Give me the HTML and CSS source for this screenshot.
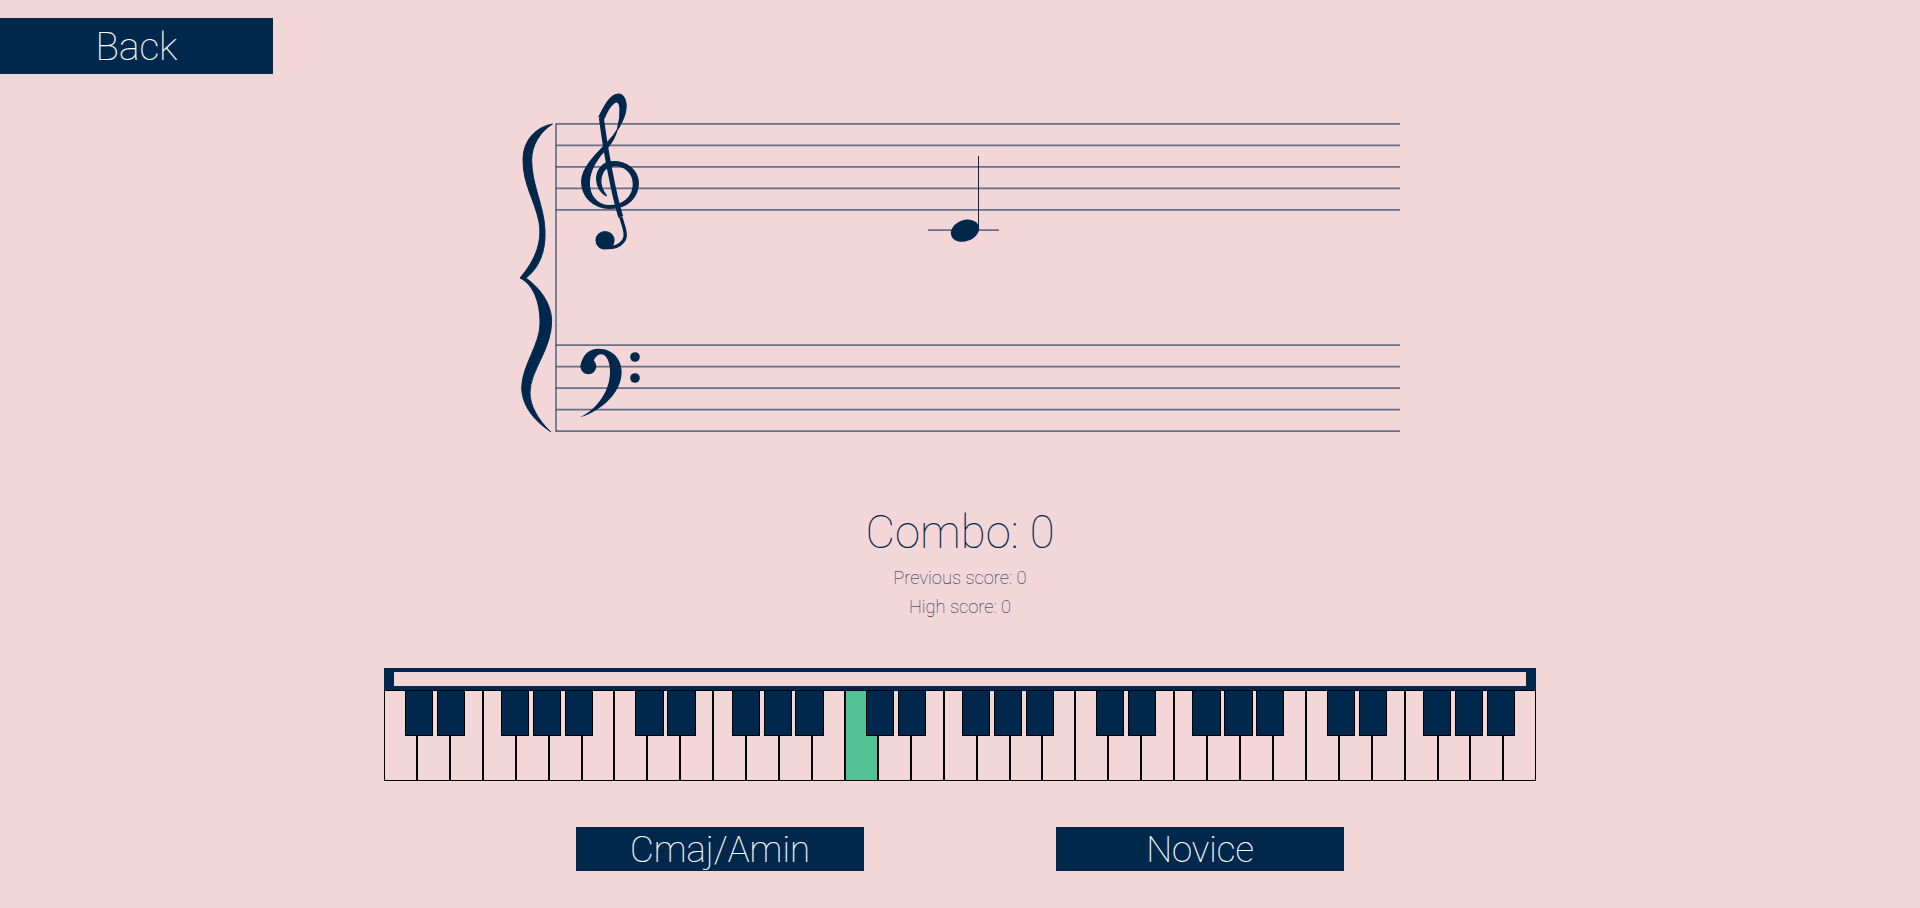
FILE: index.html
```html
<!DOCTYPE html>
<html>
	<head>
		<meta charset="UTF-8">
		<title>Note Trainer</title>
		<link rel="stylesheet" href="styles.css">
	</head>
	<body>
		<div class="back-row">
			<button class="btn btn-back">Back</button>
		</div>

		<main class="trainer">
			<svg class="score" viewBox="510 90 900 360" width="900" height="360">
				<g class="staff">
					<path d="M556 123.5V431.7"/>
					<path d="M556 123.87H1400M556 145.37H1400M556 166.87H1400M556 188.37H1400M556 209.87H1400"/>
					<path d="M556 345.2H1400M556 366.7H1400M556 388.2H1400M556 409.7H1400M556 431.2H1400"/>
					<path d="M928 230.2H999"/>
				</g>

				<!-- brace -->
				<path class="glyph brace" d="M552.5 124C536 127 523 140 523 160C523 185 534 198 539 222C542 240 537 258 520 278C534 285 540 303 540 323C540 345 522 365 521.7 388C522 405 533 420 550.7 431.7C538 420 530 405 530 393C530 370 552 350 551.7 320C551 303 540 288 526 278C539 268 546 252 545 230C544 205 531.7 185 531.7 160C531.7 145 540 132 552.5 124Z"/>

				<!-- treble clef -->
				<g class="treble" transform="translate(500 80) scale(.33333)">
					<path class="glyph" d="M355 42C375 42 380 70 378 85C375 120 345 165 320 190C285 225 245 265 245 305C245 350 280 385 330 385C385 385 415 350 415 310C415 270 380 245 340 245C305 245 288 275 290 300C292 325 305 340 320 348C310 335 300 315 303 295C308 268 325 257 345 257C375 257 400 280 400 312C400 350 370 378 325 377C290 375 266 345 268 305C270 265 300 225 325 200C350 170 362 125 360 85C359 68 352 62 343 68C330 78 320 95 313 114L297 110C310 85 330 42 355 42Z"/>
					<path class="clef-stem" d="M304 112C315 200 340 340 362 410"/>
					<path class="clef-tail" d="M362 410C375 450 382 470 368 485C358 498 340 503 322 503"/>
					<ellipse class="glyph" cx="315" cy="481" rx="27" ry="26"/>
				</g>

				<!-- bass clef -->
				<g transform="translate(500 260) scale(.33333)">
					<path class="glyph" d="M242 315C248 282 270 266 295 266C340 266 365 300 365 335C365 395 310 450 240 472C295 445 330 390 330 335C330 305 320 285 305 283C293 282 285 292 280 305L250 305Z"/>
					<circle class="glyph" cx="265" cy="319" r="24"/>
					<circle class="glyph" cx="405" cy="291" r="14.5"/>
					<circle class="glyph" cx="405" cy="354" r="14.5"/>
				</g>

				<!-- note -->
				<ellipse class="glyph" cx="965" cy="230.7" rx="14.5" ry="10.5" transform="rotate(-20 965 230.7)"/>
				<path class="note-stem" d="M978.5 156V230"/>
			</svg>

			<div class="stats">
				<div class="combo">Combo: 0</div>
				<div class="score-line">Previous score: 0</div>
				<div class="score-line">High score: 0</div>
			</div>

			<div class="piano">
				<div class="piano-bar"><div class="piano-bar-inner"></div></div>
				<div class="keys">
					<div class="white-keys">
						<div class="white-key"></div><div class="white-key"></div><div class="white-key"></div><div class="white-key"></div><div class="white-key"></div><div class="white-key"></div><div class="white-key"></div>
						<div class="white-key"></div><div class="white-key"></div><div class="white-key"></div><div class="white-key"></div><div class="white-key"></div><div class="white-key"></div><div class="white-key"></div>
						<div class="white-key active"></div><div class="white-key"></div><div class="white-key"></div><div class="white-key"></div><div class="white-key"></div><div class="white-key"></div><div class="white-key"></div>
						<div class="white-key"></div><div class="white-key"></div><div class="white-key"></div><div class="white-key"></div><div class="white-key"></div><div class="white-key"></div><div class="white-key"></div>
						<div class="white-key"></div><div class="white-key"></div><div class="white-key"></div><div class="white-key"></div><div class="white-key"></div><div class="white-key"></div><div class="white-key"></div>
					</div>
					<div class="black-keys">
						<div class="octave"><div class="black-key"></div><div class="black-key"></div><div class="black-key skip"></div><div class="black-key"></div><div class="black-key"></div></div>
						<div class="octave"><div class="black-key"></div><div class="black-key"></div><div class="black-key skip"></div><div class="black-key"></div><div class="black-key"></div></div>
						<div class="octave"><div class="black-key"></div><div class="black-key"></div><div class="black-key skip"></div><div class="black-key"></div><div class="black-key"></div></div>
						<div class="octave"><div class="black-key"></div><div class="black-key"></div><div class="black-key skip"></div><div class="black-key"></div><div class="black-key"></div></div>
						<div class="octave"><div class="black-key"></div><div class="black-key"></div><div class="black-key skip"></div><div class="black-key"></div><div class="black-key"></div></div>
					</div>
				</div>
			</div>

			<div class="options">
				<button class="btn btn-option">Cmaj/Amin</button>
				<button class="btn btn-option">Novice</button>
			</div>
		</main>
	</body>
</html>
```

FILE: styles.css
```css
body, html {
	margin: 0;
	padding: 0;
	height: 100%;
	overflow: hidden;
	background: #f3d6d8;
	color: #00274c;
	font-family: Roboto, sans-serif;
	font-weight: 100;
}

.btn {
	display: block;
	border: 0;
	padding: 0;
	background: #00274c;
	color: #fff;
	font-family: Roboto, sans-serif;
	font-weight: 100;
	-webkit-text-stroke: .15px #fff;
}
.back-row { padding-top: 18px; }
.btn-back {
	width: 273px;
	height: 56px;
	font-size: 38.8px;
}

.trainer {
	display: flex;
	flex-direction: column;
	align-items: center;
	margin-top: 16px;
}
.score { display: block; }
.staff path {
	fill: none;
	stroke: #00274c;
	stroke-width: 1.7;
	stroke-opacity: .58;
}
.glyph { fill: #00274c; }
.brace {
	stroke: #00274c;
	stroke-width: .9;
}
.treble .glyph {
	stroke: #00274c;
	stroke-width: 3.5;
}
.clef-stem {
	fill: none;
	stroke: #00274c;
	stroke-width: 15;
}
.clef-tail {
	fill: none;
	stroke: #00274c;
	stroke-width: 10;
}
.note-stem {
	fill: none;
	stroke: #00274c;
	stroke-width: 1;
}

.stats {
	margin-top: 56px;
	text-align: center;
}
.combo {
	font-size: 45.5px;
	line-height: 54px;
}
.score-line {
	font-size: 18.3px;
	line-height: 29px;
}
.combo + .score-line { margin-top: 3px; }

.piano {
	width: 1152px;
	margin-top: 47px;
}
.piano-bar {
	background: #00274c;
	padding: 4px 10px;
}
.piano-bar-inner {
	height: 14px;
	background: #f3d6d8;
}
.keys { position: relative; }
.white-keys {
	display: flex;
	height: 91px;
}
.white-key {
	flex: 1;
	box-sizing: border-box;
	border: 1px solid #000;
}
.white-key.active { background: #52c394; }
.black-keys {
	position: absolute;
	top: 0;
	left: 0;
	right: 0;
	display: flex;
}
.octave {
	flex: 1;
	display: flex;
	gap: 3.8px;
	padding-left: 21px;
}
.black-key {
	box-sizing: border-box;
	width: 28.2px;
	height: 46px;
	background: #00274c;
	border: 1px solid #000;
}
.black-key.skip { margin-left: 32.15px; }

.options {
	display: flex;
	gap: 192px;
	margin-top: 46px;
}
.btn-option {
	width: 288px;
	height: 44px;
	font-size: 36.6px;
}
```
